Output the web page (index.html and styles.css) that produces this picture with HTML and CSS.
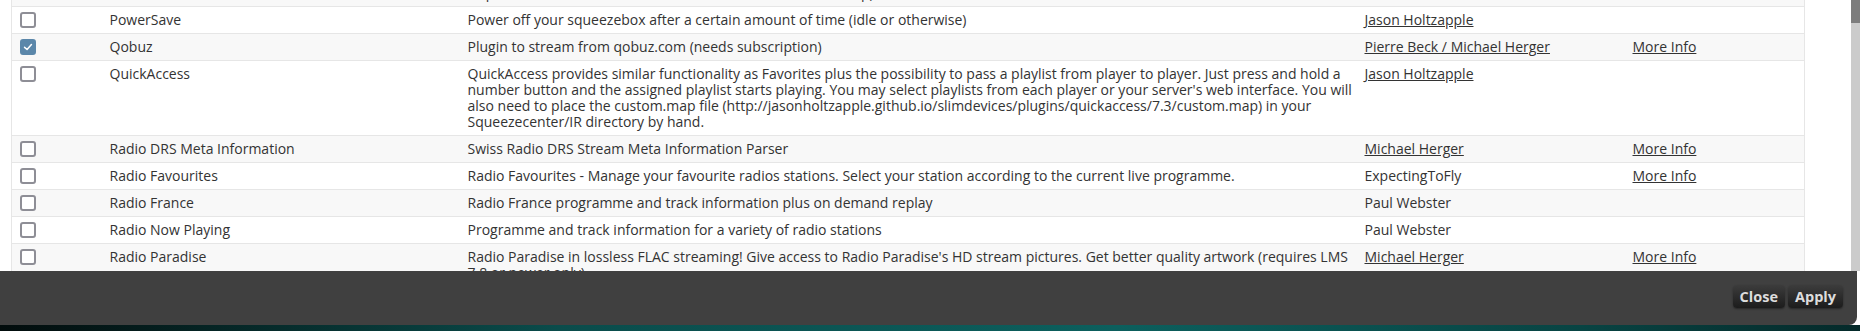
FILE: index.html
```html
<!DOCTYPE html>
<html lang="en">
<head>
  <meta charset="UTF-8">
  <title>Plugins</title>
  <link rel="stylesheet" href="styles.css">
</head>
<body>
<div class="panel">
  <div class="list">
    <table class="plugins">
      <colgroup>
        <col class="c-check">
        <col class="c-name">
        <col class="c-desc">
        <col class="c-author">
        <col class="c-info">
      </colgroup>
      <tr class="odd">
        <td><span class="box"></span></td>
        <td>Podcast Extras</td>
        <td>Adds search and subscription support for a long list of podcast and streaming providers
          (Apple, Google, Spotify, Deezer, Tidal, Qobuz, Napster, Pandora, Amazon, YouTube, Soundcloud, Bandcamp)</td>
        <td><a href="#">Someone</a></td>
        <td></td>
      </tr>
      <tr>
        <td><span class="box"></span></td>
        <td>PowerSave</td>
        <td>Power off your squeezebox after a certain amount of time (idle or otherwise)</td>
        <td><a href="#">Jason Holtzapple</a></td>
        <td></td>
      </tr>
      <tr class="odd">
        <td><span class="box checked"><svg viewBox="0 0 16 16" width="10" height="10"><path d="M2.5 8.5 L6.5 12 L13.5 4" fill="none" stroke="#fff" stroke-width="2.4" stroke-linecap="round" stroke-linejoin="round"/></svg></span></td>
        <td>Qobuz</td>
        <td>Plugin to stream from qobuz.com (needs subscription)</td>
        <td><a href="#">Pierre Beck / Michael Herger</a></td>
        <td><a href="#">More Info</a></td>
      </tr>
      <tr>
        <td><span class="box"></span></td>
        <td>QuickAccess</td>
        <td>QuickAccess provides similar functionality as Favorites plus the possibility to pass a playlist from player to player. Just press and hold a number button and the assigned playlist starts playing. You may select playlists from each player or your server's web interface. You will also need to place the custom.map file (http://jasonholtzapple.github.io/slimdevices/plugins/quickaccess/7.3/custom.map) in your Squeezecenter/IR directory by hand.</td>
        <td><a href="#">Jason Holtzapple</a></td>
        <td></td>
      </tr>
      <tr class="odd">
        <td><span class="box"></span></td>
        <td>Radio DRS Meta Information</td>
        <td>Swiss Radio DRS Stream Meta Information Parser</td>
        <td><a href="#">Michael Herger</a></td>
        <td><a href="#">More Info</a></td>
      </tr>
      <tr>
        <td><span class="box"></span></td>
        <td>Radio Favourites</td>
        <td>Radio Favourites - Manage your favourite radios stations. Select your station according to the current live programme.</td>
        <td>ExpectingToFly</td>
        <td><a href="#">More Info</a></td>
      </tr>
      <tr class="odd">
        <td><span class="box"></span></td>
        <td>Radio France</td>
        <td>Radio France programme and track information plus on demand replay</td>
        <td>Paul Webster</td>
        <td></td>
      </tr>
      <tr>
        <td><span class="box"></span></td>
        <td>Radio Now Playing</td>
        <td>Programme and track information for a variety of radio stations</td>
        <td>Paul Webster</td>
        <td></td>
      </tr>
      <tr class="odd">
        <td><span class="box"></span></td>
        <td>Radio Paradise</td>
        <td>Radio Paradise in lossless FLAC streaming! Give access to Radio Paradise's HD stream pictures. Get better quality artwork (requires LMS 7.8 or newer only)</td>
        <td><a href="#">Michael Herger</a></td>
        <td><a href="#">More Info</a></td>
      </tr>
    </table>
  </div>
  <div class="scrollbar"><div class="thumb"></div></div>
</div>

<div class="footer">
  <button class="btn">Close</button>
  <button class="btn">Apply</button>
</div>
<div class="desktop"></div>
</body>
</html>
```

FILE: styles.css
```css
html, body {
  margin: 0;
  padding: 0;
  height: 100%;
  overflow: hidden;
}

body {
  display: flex;
  flex-direction: column;
  background: #ffffff;
  color: #333333;
  font-family: 'Open Sans', 'Noto Sans', sans-serif;
  font-size: 14px;
  line-height: 16px;
}

.panel {
  height: 271px;
  display: flex;
  flex-shrink: 0;
  background: #ffffff;
}

.list {
  flex: 1;
  overflow: hidden;
  padding: 0 47px 0 11px;
}

.plugins {
  width: 1793px;
  table-layout: fixed;
  border-collapse: collapse;
  margin-top: -36px;
  border-left: 1px solid #e6e6e6;
  border-right: 1px solid #e6e6e6;
}

.c-check { width: 93px; }
.c-name { width: 358px; }
.c-desc { width: 897px; }
.c-author { width: 268px; }
.c-info { width: 177px; }

.plugins tr {
  border-bottom: 1px solid #e6e6e6;
  background: #ffffff;
}

.plugins tr.odd {
  background: #f8f8f8;
}

.plugins td {
  padding: 5px 5px 5px 5px;
  vertical-align: top;
}

.plugins a {
  color: #333333;
  text-decoration: underline;
}

.box {
  display: flex;
  align-items: center;
  justify-content: center;
  box-sizing: border-box;
  width: 16px;
  height: 16px;
  margin-left: 3px;
  border: 2px solid #8e8e96;
  border-radius: 3px;
  background: #ffffff;
}

.box.checked {
  background: #5b87aa;
  border-color: #5b87aa;
}

.scrollbar {
  width: 9px;
  background: #cbcbcb;
}

.thumb {
  height: 23px;
  background: #7d7d7d;
}

.footer {
  height: 54px;
  flex-shrink: 0;
  background: #404040;
  border-bottom-right-radius: 8px;
  margin-right: 3px;
  display: flex;
  justify-content: flex-end;
  align-items: flex-start;
  gap: 3px;
  padding: 14px 14px 0 0;
  box-sizing: border-box;
}

.btn {
  min-width: 48px;
  height: 23px;
  padding: 0 7px;
  border: none;
  border-radius: 4px;
  background: linear-gradient(#3c3c3c, #1c1c1c);
  box-shadow: 0 1px 2px rgba(0,0,0,0.4);
  color: #dddddd;
  font-family: 'Open Sans', 'Noto Sans', sans-serif;
  font-weight: bold;
  font-size: 14.5px;
  line-height: 23px;
}

.desktop {
  flex: 1;
  background: linear-gradient(90deg, #020c0c 0%, #0a4c4b 30%, #0c5f5d 60%, #084443 85%, #052a2a 100%);
}
```
